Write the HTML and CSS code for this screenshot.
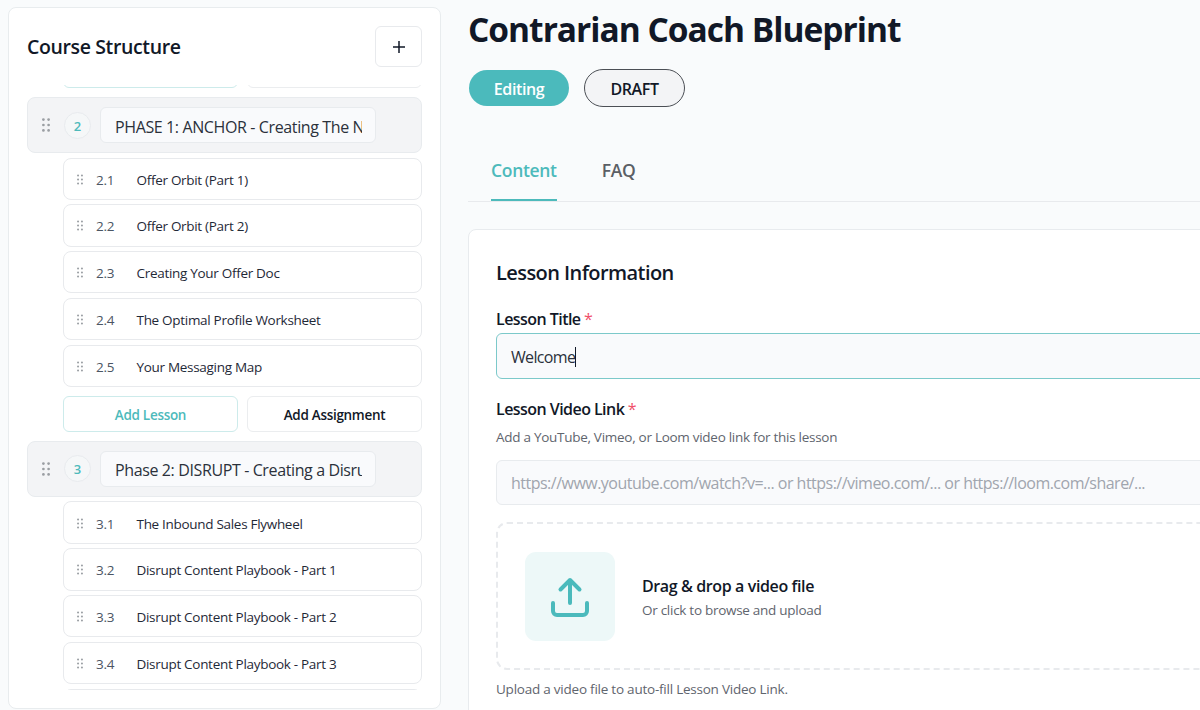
FILE: index.html
```
<!DOCTYPE html>
<html lang="en">
<head>
  <meta charset="UTF-8">
  <title>Contrarian Coach Blueprint</title>
  <link rel="stylesheet" href="styles.css">
</head>
<body>
  <svg class="sprite">
    <symbol id="grip" viewBox="0 0 8 14">
      <circle cx="1.4" cy="1.6" r="1.35"/><circle cx="6.6" cy="1.6" r="1.35"/>
      <circle cx="1.4" cy="7" r="1.35"/><circle cx="6.6" cy="7" r="1.35"/>
      <circle cx="1.4" cy="12.4" r="1.35"/><circle cx="6.6" cy="12.4" r="1.35"/>
    </symbol>
  </svg>

  <div class="page">
    <aside class="sidebar">
      <div class="sidebar-header">
        <h2>Course Structure</h2>
        <button class="btn-plus">
          <svg width="14" height="14" viewBox="0 0 14 14"><path d="M7 1v12M1 7h12"/></svg>
        </button>
      </div>

      <div class="structure">
        <div class="actions actions-scrolled">
          <button class="btn btn-lesson" aria-label="Add Lesson"></button>
          <button class="btn" aria-label="Add Assignment"></button>
        </div>

        <div class="phase">
          <svg class="grip"><use href="#grip"/></svg>
          <span class="phase-num">2</span>
          <input class="phase-title" type="text" value="PHASE 1: ANCHOR - Creating The New Offer">
        </div>
        <div class="lessons">
          <div class="lesson"><svg class="grip"><use href="#grip"/></svg><span class="num">2.1</span><span class="name">Offer Orbit (Part 1)</span></div>
          <div class="lesson"><svg class="grip"><use href="#grip"/></svg><span class="num">2.2</span><span class="name">Offer Orbit (Part 2)</span></div>
          <div class="lesson"><svg class="grip"><use href="#grip"/></svg><span class="num">2.3</span><span class="name">Creating Your Offer Doc</span></div>
          <div class="lesson"><svg class="grip"><use href="#grip"/></svg><span class="num">2.4</span><span class="name">The Optimal Profile Worksheet</span></div>
          <div class="lesson"><svg class="grip"><use href="#grip"/></svg><span class="num">2.5</span><span class="name">Your Messaging Map</span></div>
        </div>
        <div class="actions">
          <button class="btn btn-lesson">Add Lesson</button>
          <button class="btn">Add Assignment</button>
        </div>

        <div class="phase">
          <svg class="grip"><use href="#grip"/></svg>
          <span class="phase-num">3</span>
          <input class="phase-title" type="text" value="Phase 2: DISRUPT - Creating a Disruption">
        </div>
        <div class="lessons">
          <div class="lesson"><svg class="grip"><use href="#grip"/></svg><span class="num">3.1</span><span class="name">The Inbound Sales Flywheel</span></div>
          <div class="lesson"><svg class="grip"><use href="#grip"/></svg><span class="num">3.2</span><span class="name">Disrupt Content Playbook - Part 1</span></div>
          <div class="lesson"><svg class="grip"><use href="#grip"/></svg><span class="num">3.3</span><span class="name">Disrupt Content Playbook - Part 2</span></div>
          <div class="lesson"><svg class="grip"><use href="#grip"/></svg><span class="num">3.4</span><span class="name">Disrupt Content Playbook - Part 3</span></div>
          <div class="lesson"></div>
        </div>
      </div>
    </aside>

    <main class="main">
      <h1>Contrarian Coach Blueprint</h1>
      <div class="badges">
        <span class="badge badge-editing">Editing</span>
        <span class="badge badge-draft">DRAFT</span>
      </div>

      <nav class="tabs">
        <a class="tab active">Content</a>
        <a class="tab">FAQ</a>
      </nav>

      <section class="card">
        <h3>Lesson Information</h3>

        <div class="label">Lesson Title <span class="req">*</span></div>
        <div class="field focused"><span class="field-text">Welcome</span><span class="caret"></span></div>

        <div class="label label-video">Lesson Video Link <span class="req">*</span></div>
        <p class="hint">Add a YouTube, Vimeo, or Loom video link for this lesson</p>
        <input class="field field-link" type="text" placeholder="https://www.youtube.com/watch?v=... or https://vimeo.com/... or https://loom.com/share/...">

        <div class="dropzone">
          <div class="drop-icon">
            <svg width="40" height="40" viewBox="0 0 40 40">
              <path d="M20 26V3M10.5 12.5L20 3l9.5 9.5M3 26v8a4 4 0 0 0 4 4h26a4 4 0 0 0 4-4v-8"/>
            </svg>
          </div>
          <div>
            <div class="drop-title">Drag &amp; drop a video file</div>
            <div class="drop-sub">Or click to browse and upload</div>
          </div>
        </div>
        <p class="note">Upload a video file to auto-fill Lesson Video Link.</p>
      </section>
    </main>
  </div>
</body>
</html>
```
FILE: styles.css
```
* {
  box-sizing: border-box;
}

body {
  margin: 0;
  font-family: "Segoe UI", "Open Sans", "Noto Sans", sans-serif;
  background-color: #f9fbfc;
  color: #111827;
  overflow: hidden;
}

h1, h2, h3, p {
  margin: 0;
}

button, input {
  font-family: inherit;
  margin: 0;
}

.sprite {
  display: none;
}

.page {
  display: flex;
  gap: 27px;
  height: 710px;
  padding-left: 8px;
  overflow: hidden;
}

/* sidebar */
.sidebar {
  flex: 0 0 433px;
  height: 702px;
  margin-top: 7px;
  padding: 18px 18px 0;
  background-color: #fff;
  border: 1px solid #e8ecee;
  border-radius: 8px;
}

.sidebar-header {
  display: flex;
  align-items: center;
  justify-content: space-between;
  height: 41px;
}

.sidebar-header h2 {
  font-size: 19.5px;
  font-weight: 600;
  letter-spacing: -0.37px;
}

.btn-plus {
  display: flex;
  align-items: center;
  justify-content: center;
  width: 47px;
  height: 41px;
  background-color: #fff;
  border: 1px solid #e8eaed;
  border-radius: 6px;
}

.btn-plus svg {
  fill: none;
  stroke: #111827;
  stroke-width: 1.5;
}

.structure {
  height: 605px;
  margin-top: 18px;
  overflow: hidden;
}

.actions {
  display: flex;
  gap: 9px;
  margin: 9px 0 9px 36px;
}

.actions-scrolled {
  margin-top: -33px;
}

.btn {
  flex: 1;
  height: 36px;
  padding: 2px 0 0;
  background-color: #fff;
  border: 1px solid #ebedef;
  border-radius: 6px;
  color: #111827;
  font-size: 13.5px;
  font-weight: 600;
  letter-spacing: -0.3px;
}

.btn-lesson {
  color: #4dbabb;
  border-color: #cdebeb;
}

.phase {
  display: flex;
  align-items: center;
  height: 56px;
  padding-left: 14px;
  background-color: #f3f4f6;
  border: 1px solid #e8ebee;
  border-radius: 8px;
}

.grip {
  flex: none;
  fill: #9a9ea3;
}

.phase .grip {
  width: 8px;
  height: 14px;
}

.phase-num {
  width: 27px;
  height: 27px;
  margin: 0 9px 0 14px;
  border: 1px solid #e8ebee;
  border-radius: 50%;
  background-color: #f5f7f8;
  color: #4dbabb;
  font-size: 13px;
  font-weight: 600;
  line-height: 26px;
  text-align: center;
}

.phase-title {
  width: 276px;
  height: 36px;
  padding: 3px 13px 0 14px;
  background-color: #f9fafc;
  border: 1px solid #e8ebee;
  border-radius: 6px;
  color: #2b313b;
  font-size: 16px;
  letter-spacing: -0.38px;
}

.lessons {
  display: flex;
  flex-direction: column;
  gap: 4.5px;
  margin: 4.5px 0 0 36px;
}

.lesson {
  display: flex;
  align-items: center;
  height: 42.3px;
  padding: 2px 0 0 13px;
  background-color: #fff;
  border: 1px solid #e8eaed;
  border-radius: 8px;
  font-size: 13.5px;
  color: #1f2937;
}

.lesson .grip {
  width: 6px;
  height: 11px;
  margin-top: -1px;
}

.num {
  width: 40.5px;
  margin-left: 13px;
  color: #4b5563;
  letter-spacing: -0.2px;
}

.name {
  letter-spacing: -0.3px;
}

/* main column */
.main {
  flex: 0 0 1000px;
}

h1 {
  padding-top: 6px;
  font-size: 33.5px;
  font-weight: 700;
  line-height: 46px;
  letter-spacing: -1px;
}

.badges {
  display: flex;
  align-items: center;
  gap: 15px;
  margin-top: 17px;
  padding-left: 1px;
}

.badge {
  border-radius: 20px;
  font-size: 16px;
  font-weight: 600;
  letter-spacing: -0.4px;
  text-align: center;
}

.badge-editing {
  width: 100px;
  height: 36px;
  line-height: 39px;
  background-color: #4bbabc;
  color: #fff;
}

.badge-draft {
  width: 101px;
  height: 38px;
  line-height: 39px;
  background-color: #f3f4f6;
  border: 1px solid #4b4f55;
}

.tabs {
  display: flex;
  gap: 45px;
  height: 68px;
  margin-top: 27px;
  padding-left: 23px;
  border-bottom: 1px solid #e8eaed;
}

.tab {
  height: 67px;
  padding-top: 24px;
  color: #5b5f65;
  font-size: 17.5px;
  font-weight: 600;
  line-height: 25px;
  letter-spacing: -0.32px;
}

.tab.active {
  color: #4dbabb;
  border-bottom: 2px solid #4dbabb;
}

.card {
  height: 600px;
  margin-top: 27px;
  padding: 27px;
  background-color: #fff;
  border: 1px solid #e8ebee;
  border-radius: 8px;
}

.card h3 {
  font-size: 20px;
  font-weight: 600;
  line-height: 32px;
  letter-spacing: -0.57px;
}

.label {
  margin-top: 18px;
  font-size: 16px;
  font-weight: 600;
  line-height: 24px;
  letter-spacing: -0.55px;
}

.label-video {
  margin-top: 18px;
}

.req {
  color: #f0506a;
  font-weight: 400;
}

.field {
  display: flex;
  align-items: center;
  width: 100%;
  height: 45px;
  padding: 2px 13px 0 14px;
  background-color: #f9fafc;
  border: 1px solid #e8ebee;
  border-radius: 6px;
  color: #2b313b;
  font-size: 16px;
  letter-spacing: -0.51px;
}

.focused {
  height: 46px;
  margin-top: 2px;
  border-color: #7cc9ca;
}

.field-text {
  letter-spacing: -0.65px;
}

.caret {
  width: 1px;
  height: 20px;
  background-color: #111827;
}

.hint, .drop-sub, .note {
  color: #5f656e;
  font-size: 13.5px;
  line-height: 20px;
  letter-spacing: -0.28px;
}

.hint {
  margin: 6px 0 13px;
}

.field-link {
  padding-top: 0;
}

.field-link::placeholder {
  color: #a0a5ae;
}

.dropzone {
  display: flex;
  align-items: center;
  gap: 27px;
  height: 148px;
  margin-top: 17px;
  padding: 1px 0 0 27px;
  border: 2px dashed #e8eaed;
  border-radius: 11px;
}

.drop-icon {
  display: flex;
  align-items: center;
  justify-content: center;
  width: 90px;
  height: 89px;
  background-color: #edf8f8;
  border-radius: 11px;
}

.drop-icon svg {
  fill: none;
  stroke: #4bbabc;
  stroke-width: 4;
  stroke-linecap: round;
  stroke-linejoin: round;
}

.drop-title {
  padding-top: 1px;
  font-size: 16px;
  font-weight: 600;
  line-height: 26px;
  letter-spacing: -0.38px;
}

.drop-sub {
  line-height: 22px;
}

.note {
  margin-top: 9px;
  letter-spacing: -0.23px;
}
```
